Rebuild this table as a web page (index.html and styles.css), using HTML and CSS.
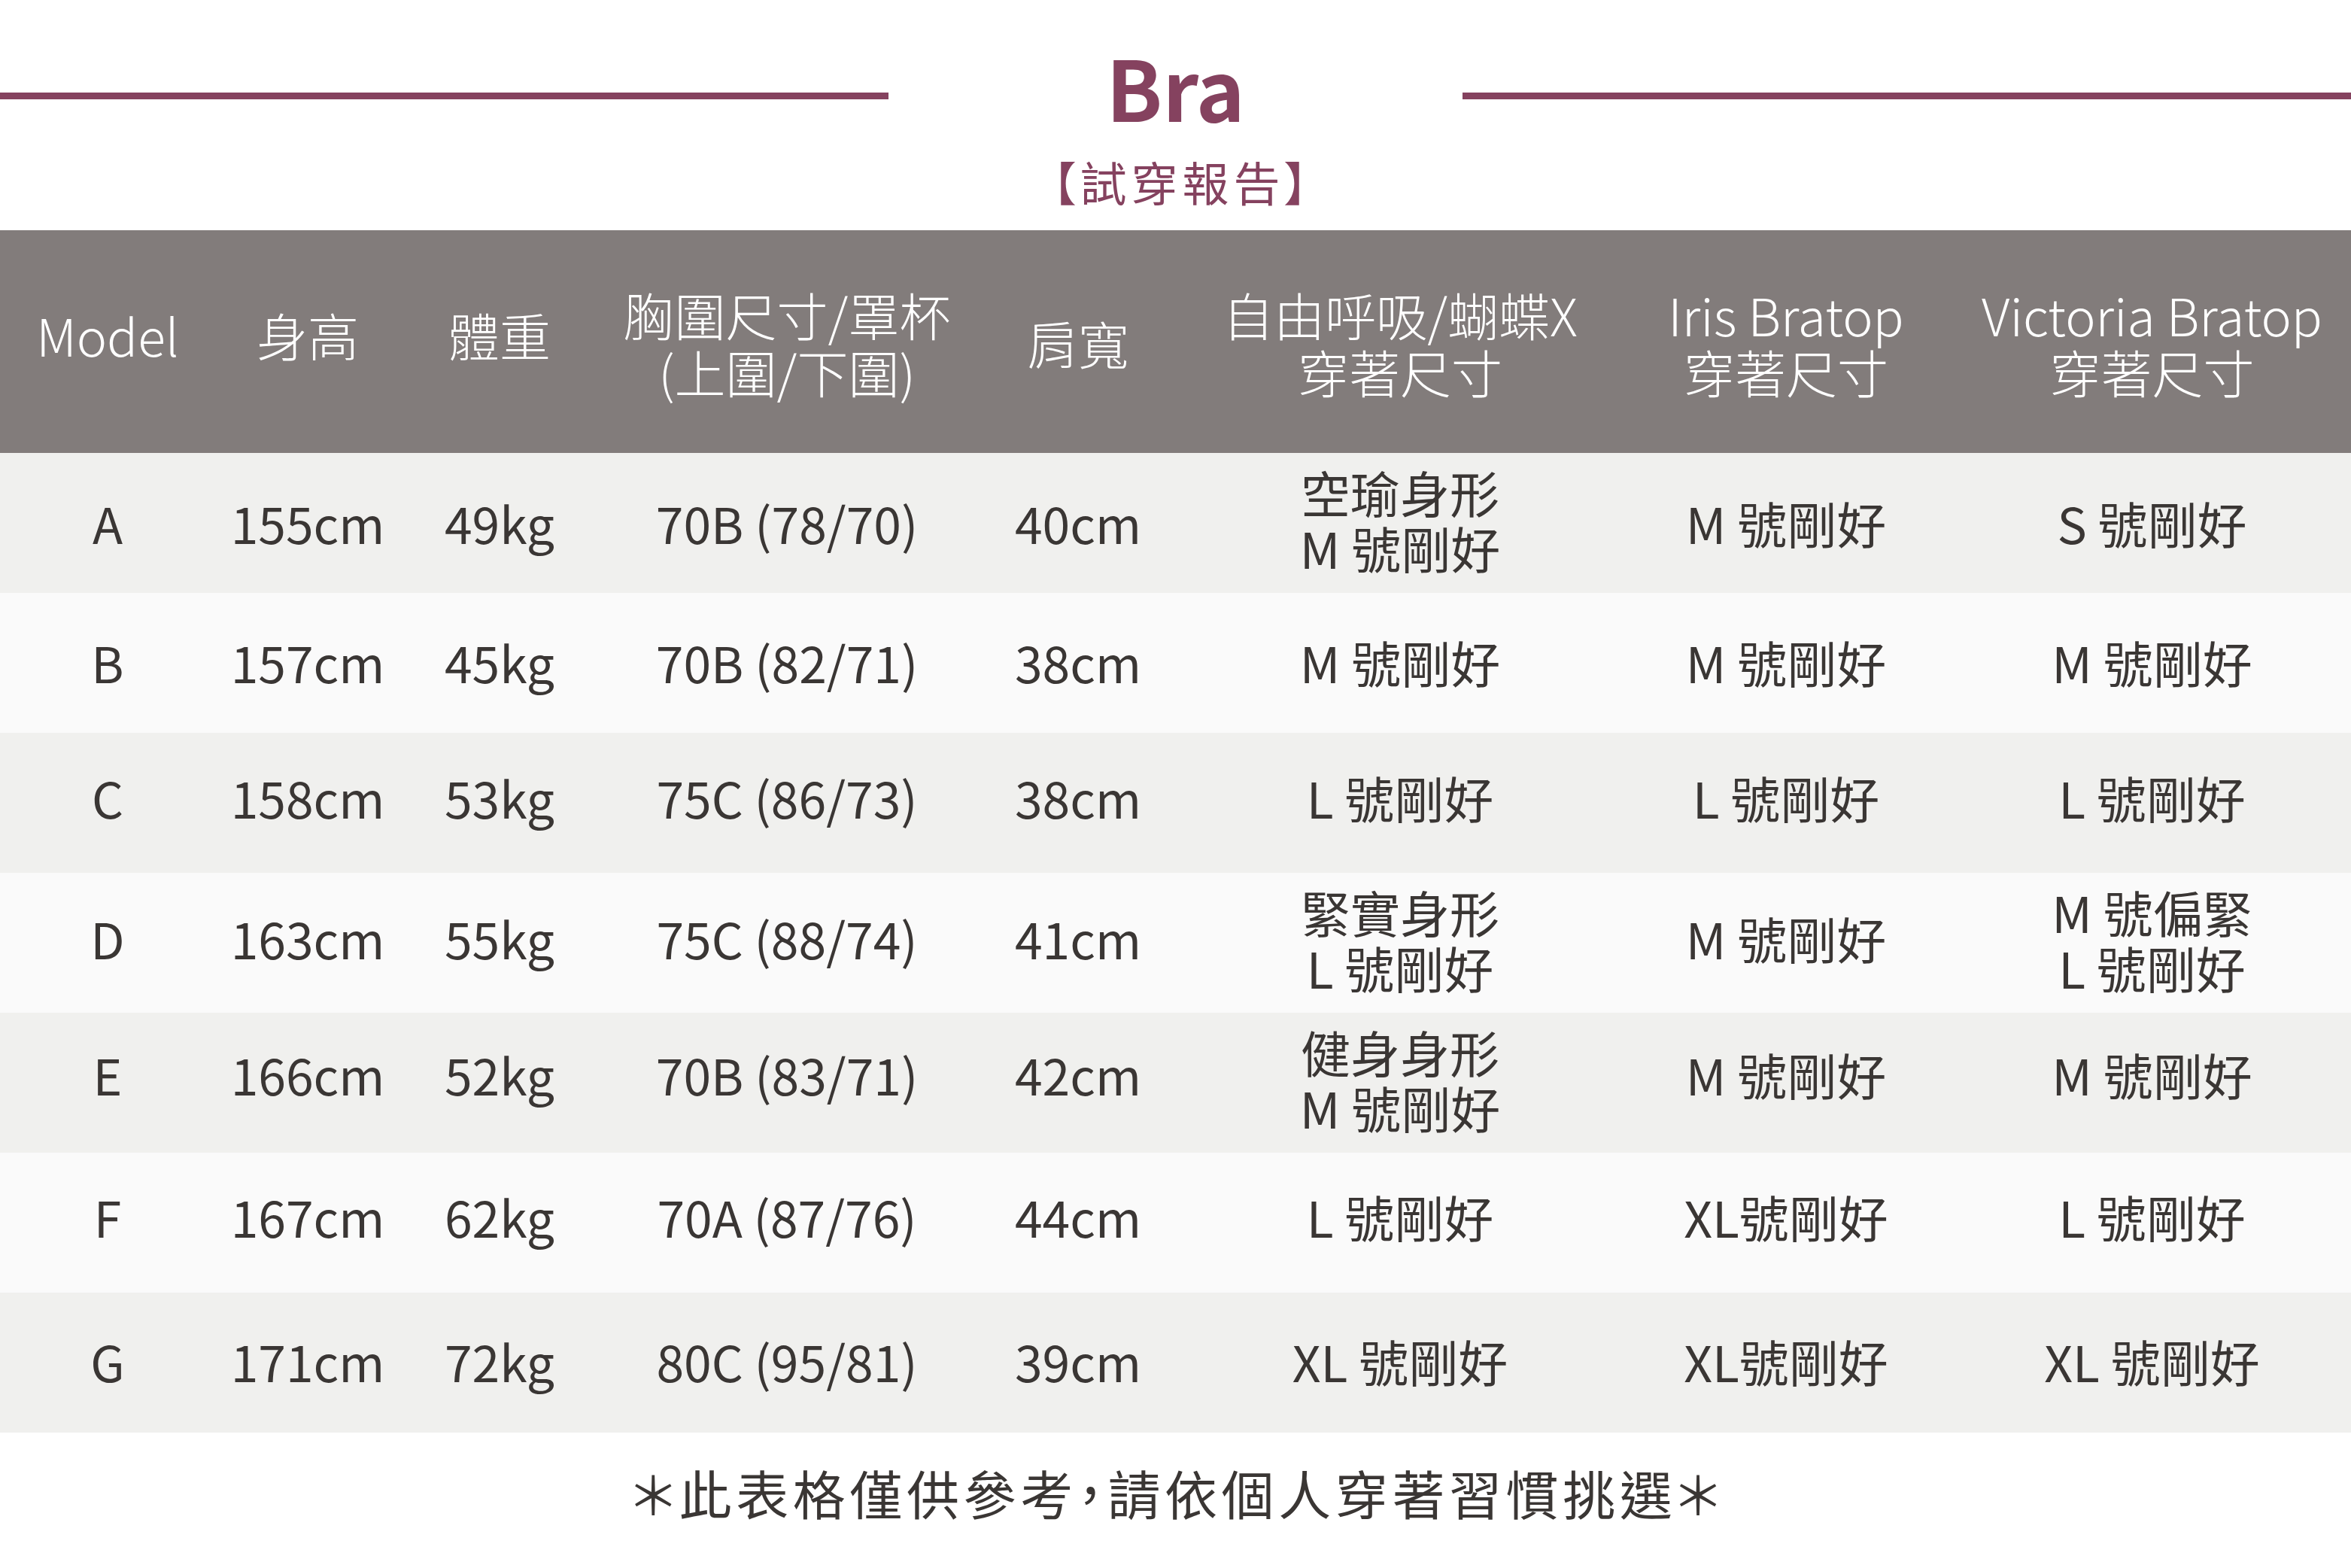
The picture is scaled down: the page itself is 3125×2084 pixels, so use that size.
FILE: index.html
```html
<!DOCTYPE html>
<html lang="zh-Hant">
<head>
<meta charset="utf-8">
<title>Bra 試穿報告</title>
<link rel="stylesheet" href="styles.css">
</head>
<body>
<div class="page">
  <div class="title-row">
    <div class="rule"></div>
    <h1 class="title">Bra</h1>
    <div class="rule"></div>
  </div>
  <div class="subtitle">【試穿報告】</div>

  <div class="table">
    <div class="row head">
      <div class="cell up">Model</div>
      <div class="cell up">身高</div>
      <div class="cell up">體重</div>
      <div class="cell">胸圍尺寸/罩杯<br>(上圍/下圍)</div>
      <div class="cell">肩寬</div>
      <div class="cell">自由呼吸/蝴蝶X<br>穿著尺寸</div>
      <div class="cell">Iris Bratop<br>穿著尺寸</div>
      <div class="cell">Victoria Bratop<br>穿著尺寸</div>
    </div>
    <div class="row odd r-a">
      <div class="cell">A</div><div class="cell">155cm</div><div class="cell">49kg</div><div class="cell">70B (78/70)</div><div class="cell">40cm</div>
      <div class="cell two">空瑜身形<br>M 號剛好</div><div class="cell">M 號剛好</div><div class="cell">S 號剛好</div>
    </div>
    <div class="row even r-b">
      <div class="cell">B</div><div class="cell">157cm</div><div class="cell">45kg</div><div class="cell">70B (82/71)</div><div class="cell">38cm</div>
      <div class="cell">M 號剛好</div><div class="cell">M 號剛好</div><div class="cell">M 號剛好</div>
    </div>
    <div class="row odd r-c">
      <div class="cell">C</div><div class="cell">158cm</div><div class="cell">53kg</div><div class="cell">75C (86/73)</div><div class="cell">38cm</div>
      <div class="cell">L 號剛好</div><div class="cell">L 號剛好</div><div class="cell">L 號剛好</div>
    </div>
    <div class="row even r-d">
      <div class="cell">D</div><div class="cell">163cm</div><div class="cell">55kg</div><div class="cell">75C (88/74)</div><div class="cell">41cm</div>
      <div class="cell two">緊實身形<br>L 號剛好</div><div class="cell">M 號剛好</div><div class="cell two">M 號偏緊<br>L 號剛好</div>
    </div>
    <div class="row odd r-e">
      <div class="cell">E</div><div class="cell">166cm</div><div class="cell">52kg</div><div class="cell">70B (83/71)</div><div class="cell">42cm</div>
      <div class="cell two">健身身形<br>M 號剛好</div><div class="cell">M 號剛好</div><div class="cell">M 號剛好</div>
    </div>
    <div class="row even r-f">
      <div class="cell">F</div><div class="cell">167cm</div><div class="cell">62kg</div><div class="cell">70A (87/76)</div><div class="cell">44cm</div>
      <div class="cell">L 號剛好</div><div class="cell">XL號剛好</div><div class="cell">L 號剛好</div>
    </div>
    <div class="row odd r-g">
      <div class="cell">G</div><div class="cell">171cm</div><div class="cell">72kg</div><div class="cell">80C (95/81)</div><div class="cell">39cm</div>
      <div class="cell">XL 號剛好</div><div class="cell">XL號剛好</div><div class="cell">XL 號剛好</div>
    </div>
  </div>

  <div class="note">＊此表格僅供參考，請依個人穿著習慣挑選＊</div>
</div>
</body>
</html>
```

FILE: styles.css
```css
html, body {
  margin: 0;
  padding: 0;
  background: #ffffff;
}

body {
  font-family: "Noto Sans CJK TC", "Noto Sans", sans-serif;
  color: #3a3634;
}

.page {
  width: 3125px;
  height: 2084px;
  display: flex;
  flex-direction: column;
}

.title-row {
  display: flex;
  align-items: flex-start;
  padding-top: 59px;
}

.rule {
  flex: 1;
  height: 9px;
  margin-top: 64px;
  background: #85425f;
}

.title {
  margin: 0 289px;
  font-size: 110px;
  line-height: 110px;
  font-weight: 700;
  color: #85425f;
}

.subtitle {
  margin-top: 41px;
  text-align: center;
  font-size: 62px;
  line-height: 62px;
  letter-spacing: 6px;
  font-feature-settings: "palt";
  font-weight: 400;
  color: #85425f;
  padding-left: 18px;
}

.table {
  margin-top: 34px;
  display: flex;
  flex-direction: column;
}

.row {
  display: grid;
  grid-template-columns: 286px 246px 264px 500px 274px 582px 444px 529px;
  height: 186px;
}

.row.head {
  height: 296px;
  background: #827c7b;
  color: #ffffff;
  font-size: 68px;
  line-height: 76px;
  font-weight: 300;
}

.row.odd {
  background: #f0f0ee;
}

.row.even {
  background: #fafafa;
}

.cell {
  display: flex;
  align-items: center;
  justify-content: center;
  text-align: center;
  white-space: nowrap;
}

.head .cell {
  padding-top: 4px;
}

.head .cell.up {
  padding-top: 0;
  padding-bottom: 18px;
}

.row.odd .cell,
.row.even .cell {
  font-size: 66px;
  line-height: 74px;
  font-weight: 400;
}

.r-a .cell { padding-bottom: 3px; }
.r-b .cell { padding-bottom: 4px; }
.r-c .cell { padding-bottom: 17px; }
.r-d .cell { padding-bottom: 15px; }
.r-e .cell { padding-bottom: 24px; }
.r-f .cell { padding-bottom: 19px; }
.r-g .cell { padding-bottom: 6px; }

.row .cell.two {
  padding-bottom: 10px;
}

.note {
  flex: 1;
  display: flex;
  align-items: center;
  justify-content: center;
  padding-bottom: 20px;
  padding-left: 6px;
  font-size: 70px;
  line-height: 70px;
  letter-spacing: 5.6px;
  font-feature-settings: "palt";
  font-weight: 400;
  color: #3a3634;
}
```
